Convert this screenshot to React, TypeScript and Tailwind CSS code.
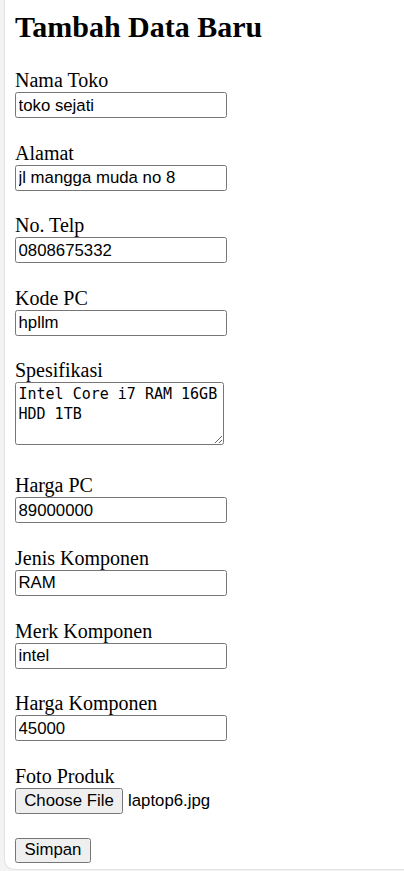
import React from "react";

const fields = [
  { label: "Nama Toko", value: "toko sejati" },
  { label: "Alamat", value: "jl mangga muda no 8" },
  { label: "No. Telp", value: "0808675332" },
  { label: "Kode PC", value: "hpllm" },
];

const fields2 = [
  { label: "Harga PC", value: "89000000" },
  { label: "Jenis Komponen", value: "RAM" },
  { label: "Merk Komponen", value: "intel" },
  { label: "Harga Komponen", value: "45000" },
];

const Label = ({ text }: { text: string }) => (
  <label className="block h-[23px] text-[20px] leading-[23px]">{text}</label>
);

const Field = ({ label, value }: { label: string; value: string }) => (
  <div className="mb-[23.6px] flex flex-col items-start">
    <Label text={label} />
    <input
      type="text"
      defaultValue={value}
      className="h-[26px] w-[212px] rounded-[2.5px] border border-[#767676] bg-white px-[2.5px] pt-[1px] font-['Liberation_Sans',Arial,sans-serif] text-[16.8px] text-black outline-none"
    />
  </div>
);

const App = () => {
  return (
    <main className="min-h-[871px] bg-[#f3f3f3] pl-[4px] font-['Liberation_Serif','Times_New_Roman',serif] text-black">
      <div className="h-[870px] rounded-bl-[10px] border-b border-l border-[#e2e2e2] bg-white pl-[10px] pt-[9px]">
        <h1 className="mb-[25px] text-[30px] font-bold leading-[35px]">
          Tambah Data Baru
        </h1>

        {fields.map((f) => (
          <Field key={f.label} label={f.label} value={f.value} />
        ))}

        <div className="mb-[29px] flex flex-col items-start">
          <Label text="Spesifikasi" />
          <textarea
            defaultValue="Intel Core i7 RAM 16GB HDD 1TB"
            className="h-[63px] w-[209px] resize rounded-[2.5px] border border-[#767676] bg-white px-[2.5px] py-[2px] font-['DejaVu_Sans_Mono','Liberation_Mono',monospace] text-[15px] leading-[19.5px] text-black outline-none"
          />
        </div>

        {fields2.map((f) => (
          <Field key={f.label} label={f.label} value={f.value} />
        ))}

        <div className="mb-[24px] flex flex-col items-start">
          <Label text="Foto Produk" />
          <div className="flex items-center font-['Liberation_Sans',Arial,sans-serif] text-[16.8px]">
            <button className="h-[26.5px] w-[108px] rounded-[2.5px] border border-[#767676] bg-[#efefef] leading-none">
              Choose File
            </button>
            <span className="ml-[5px]">laptop6.jpg</span>
          </div>
        </div>

        <button className="h-[25px] w-[76px] rounded-[2.5px] border border-[#767676] bg-[#efefef] font-['Liberation_Sans',Arial,sans-serif] text-[16.8px] leading-none">
          Simpan
        </button>
      </div>
    </main>
  );
};

export default App;
